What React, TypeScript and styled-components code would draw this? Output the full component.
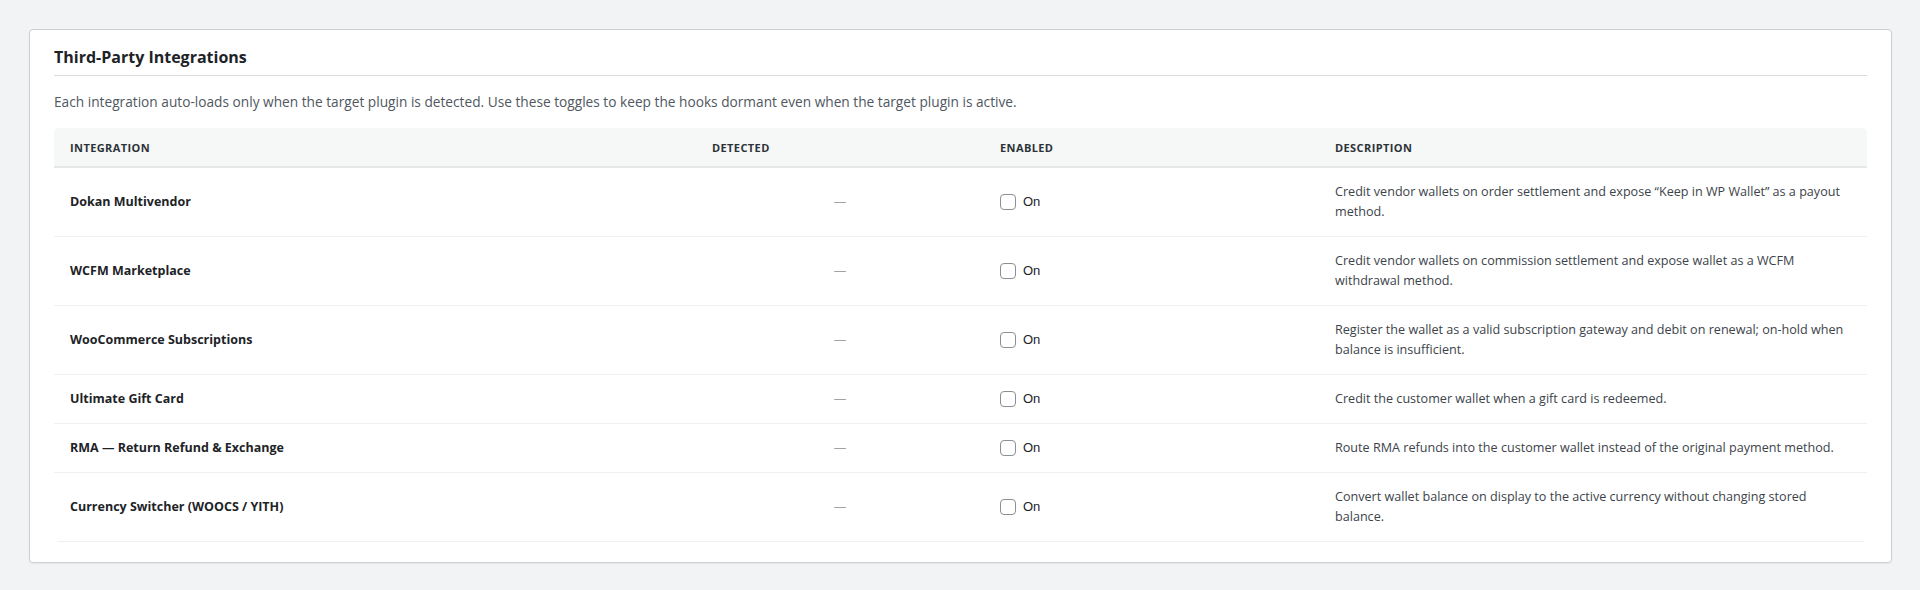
import React from 'react';
import styled, { createGlobalStyle } from 'styled-components';

const GlobalStyle = createGlobalStyle`
  * { box-sizing: border-box; }
  body {
    margin: 0;
    background: #f2f3f4;
    font-family: "Open Sans", "Noto Sans", sans-serif;
    color: #1d2327;
  }
`;

const integrations = [
  {
    name: 'Dokan Multivendor',
    desc: 'Credit vendor wallets on order settlement and expose “Keep in WP Wallet” as a payout method.',
  },
  {
    name: 'WCFM Marketplace',
    desc: 'Credit vendor wallets on commission settlement and expose wallet as a WCFM withdrawal method.',
  },
  {
    name: 'WooCommerce Subscriptions',
    desc: 'Register the wallet as a valid subscription gateway and debit on renewal; on-hold when balance is insufficient.',
  },
  {
    name: 'Ultimate Gift Card',
    desc: 'Credit the customer wallet when a gift card is redeemed.',
  },
  {
    name: 'RMA — Return Refund & Exchange',
    desc: 'Route RMA refunds into the customer wallet instead of the original payment method.',
  },
  {
    name: 'Currency Switcher (WOOCS / YITH)',
    desc: 'Convert wallet balance on display to the active currency without changing stored balance.',
  },
];

export default function App() {
  return (
    <>
      <GlobalStyle />
      <Page>
        <Panel>
          <Title>Third-Party Integrations</Title>
          <Intro>
            Each integration auto-loads only when the target plugin is detected. Use these toggles to keep the hooks
            dormant even when the target plugin is active.
          </Intro>
          <TableWrap>
            <Table>
              <colgroup>
                <col style={{ width: 642 }} />
                <col style={{ width: 288 }} />
                <col style={{ width: 335 }} />
                <col />
              </colgroup>
              <thead>
                <tr>
                  <Th>Integration</Th>
                  <Th>Detected</Th>
                  <Th>Enabled</Th>
                  <Th>Description</Th>
                </tr>
              </thead>
              <tbody>
                {integrations.map((item) => (
                  <tr key={item.name}>
                    <Name>{item.name}</Name>
                    <Td $align="center">
                      <Dash>—</Dash>
                    </Td>
                    <Td>
                      <Toggle>
                        <Checkbox type="checkbox" />
                        <span>On</span>
                      </Toggle>
                    </Td>
                    <Desc>{item.desc}</Desc>
                  </tr>
                ))}
              </tbody>
            </Table>
          </TableWrap>
        </Panel>
      </Page>
    </>
  );
}

const Page = styled.div`
  padding: 29px 28px 29px 29px;
`;

const Panel = styled.section`
  background: #fff;
  border: 1px solid #cdcfd2;
  border-radius: 4px;
  box-shadow: 0 1px 2px rgba(0, 0, 0, 0.06);
  padding: 16px 24px 20px;
`;

const Title = styled.h2`
  margin: 0;
  padding-bottom: 7px;
  border-bottom: 1px solid #dcdcde;
  font-size: 16px;
  font-weight: 700;
  line-height: 22px;
  color: #1d2327;
`;

const Intro = styled.p`
  margin: 16px 0;
  font-size: 13.7px;
  line-height: 19.5px;
  color: #50575e;
`;

const TableWrap = styled.div`
  border-radius: 5px;
  overflow: hidden;
`;

const Table = styled.table`
  width: 100%;
  table-layout: fixed;
  border-collapse: collapse;
`;

const Th = styled.th`
  background: #f6f7f7;
  border-bottom: 2px solid #e6e7e8;
  padding: 12px 16px 10px;
  text-align: left;
  font-size: 11px;
  line-height: 16px;
  font-weight: 700;
  letter-spacing: 0.4px;
  text-transform: uppercase;
  color: #2c3338;
`;

const Td = styled.td<{ $align?: 'left' | 'center' }>`
  padding: 14px 16px;
  border-bottom: 1px solid #f0f0f1;
  vertical-align: middle;
  text-align: ${(p) => p.$align || 'left'};
  font-size: 12.6px;
  line-height: 20px;
`;

const Name = styled(Td)`
  font-size: 12.5px;
  font-weight: 700;
  color: #1d2327;
`;

const Desc = styled(Td)`
  color: #3c434a;
`;

const Dash = styled.span`
  color: #9ea3a8;
`;

const Toggle = styled.label`
  display: flex;
  align-items: center;
  gap: 7px;
  font-family: "Liberation Sans", Arial, sans-serif;
  font-size: 13px;
  color: #1d2327;
`;

const Checkbox = styled.input`
  appearance: none;
  margin: 0;
  width: 16px;
  height: 16px;
  border: 1px solid #8c8f94;
  border-radius: 4px;
  background: #fff;
`;
